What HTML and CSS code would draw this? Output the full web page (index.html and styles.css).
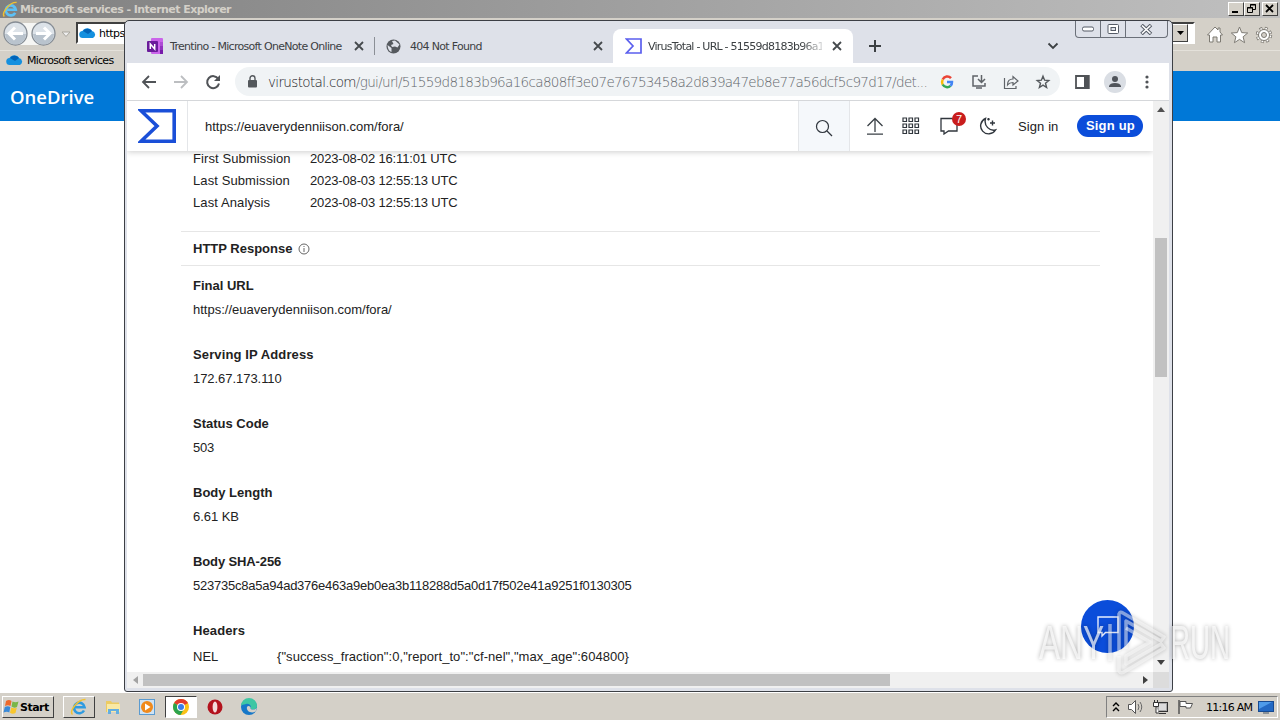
FILE: index.html
```html
<!DOCTYPE html>
<html lang="en">
<head>
  <meta charset="UTF-8">
  <meta name="viewport" content="width=device-width, initial-scale=1.0">
  <title>Microsoft services</title>
  <link rel="stylesheet" href="styles.css">
</head>
<body>
  <div class="desktop">

    <!-- Internet Explorer window -->
    <div class="ie-title">
      <svg class="ie-logo" width="17" height="17" viewBox="0 0 18 18"><path d="M14 12.500a5.300 5.300 0 1 1 .6-3.200H5" fill="none" stroke="#5cc0f5" stroke-width="2.800"/><path d="M2.500 16.500C-1 13 8 1 15.500 1.500" fill="none" stroke="#f2c230" stroke-width="1.500"/></svg>
      <span class="ie-caption">Microsoft services - Internet Explorer</span>
      <div class="classic-buttons">
        <span class="classic"><svg width="13" height="11"><path d="M3 9h6" stroke="#000" stroke-width="2"/></svg></span>
        <span class="classic"><svg width="13" height="11"><path d="M5.500 4V1.500h5v5H8M5 2h6M2.500 4.500h5v5h-5zM2 5h6" fill="none" stroke="#000"/></svg></span>
        <span class="classic last"><svg width="13" height="11"><path d="M3 2l7 7M10 2l-7 7" stroke="#000" stroke-width="1.800"/></svg></span>
      </div>
    </div>
    <div class="ie-toolbar">
      <svg width="72" height="32" viewBox="0 0 72 32">
        <rect x="4" y="5" width="50" height="22" rx="11" fill="#f6f6f4"/>
        <g fill="#dce2e8" stroke="#858c94" stroke-width="1.300"><circle cx="15.500" cy="15.500" r="11.500"/><circle cx="43.500" cy="15.500" r="11.500"/></g>
        <g fill="#b9c3cd"><path d="M5 16a10.500 10.500 0 0 0 21 0zM33 16a10.500 10.500 0 0 0 21 0z"/></g>
        <path d="M23 15.500H9m6-6l-6 6 6 6M36 15.500h14m-6-6l6 6-6 6" fill="none" stroke="#fff" stroke-width="3"/>
        <path d="M62 14h8l-4 4.500z" fill="#eee" stroke="#a9a69e"/>
      </svg>
      <div class="ie-address">
        <svg class="cloud" width="18" height="12" viewBox="0 0 18 12"><path d="M4 11a3.500 3.500 0 0 1-.5-7A5.500 5.500 0 0 1 13 4a3.700 3.700 0 0 1 1 7z" fill="#1490df"/><path d="M4 4a5.500 5.500 0 0 1 9 0L9 7z" fill="#0364b8"/></svg>
        <span>https</span>
        <span class="dropdown"><svg width="9" height="6"><path d="M1 1h7L4.500 5z"/></svg></span>
      </div>
      <svg class="ie-tools" width="72" height="22" viewBox="0 0 72 22">
        <g fill="#fff" stroke="#7d7a73" stroke-width="1">
          <path d="M1.500 11L9 3l3 3V4h2v4l2.500 3h-2v7H11v-5H7v5H3.500v-7z"/>
          <path d="M33.500 3l2.200 5.600 6 .4-4.600 3.800 1.500 5.900-5.100-3.300-5.100 3.300 1.500-5.900L25.300 9l6-.4z"/>
          <circle cx="58" cy="11" r="6.200" fill="none" stroke-width="4" stroke-dasharray="2.600 2.270"/>
          <circle cx="58" cy="11" r="6.200" fill="none" stroke="#fff" stroke-width="2.400" stroke-dasharray="1.600 3.270" stroke-dashoffset="-.5"/>
          <circle cx="58" cy="11" r="5.500"/><circle cx="58" cy="11" r="2.500" fill="#d4d0c8"/>
        </g>
      </svg>
    </div>
    <div class="ie-favorites">
      <svg class="cloud" width="18" height="12" viewBox="0 0 18 12"><path d="M4 11a3.500 3.500 0 0 1-.5-7A5.500 5.500 0 0 1 13 4a3.700 3.700 0 0 1 1 7z" fill="#1490df"/><path d="M4 4a5.500 5.500 0 0 1 9 0L9 7z" fill="#0364b8"/></svg>
      <span>Microsoft services</span>
    </div>
    <div class="onedrive">OneDrive</div>
    <div class="ie-page"></div>

    <!-- Taskbar -->
    <div class="taskbar">
      <div class="start">
        <svg width="17" height="16" viewBox="0 0 17 16"><path d="M3 2q3-2 5.500 0L7.500 7Q5 5.500 2 7z" fill="#ee6a2c"/><path d="M9.500 2.500q3 1.500 6 0L14 8q-3 1.500-5.500-.5z" fill="#7ab648"/><path d="M1.800 8q3-1.500 5.500 0l-1 5.500Q4 12 .5 13.500z" fill="#3a8ad8"/><path d="M8.300 8.500q2.700 1.500 5.500.3L12.500 14q-3 1.500-5.500-.3z" fill="#f8c62c"/></svg>
        <span>Start</span>
      </div>
      <div class="task raised"><svg width="18" height="18" viewBox="0 0 18 18"><path d="M14 12.500a5.300 5.300 0 1 1 .6-3.200H5" fill="none" stroke="#2f9be0" stroke-width="2.600"/><path d="M2.500 16.500C-1 13 8 1 15.500 1.500" fill="none" stroke="#f2c230" stroke-width="1.500"/></svg></div>
      <div class="task"><svg width="18" height="18" viewBox="0 0 18 18"><path d="M2 3h5l1 1.500h7V14H2z" fill="#eccb62"/><path d="M3 6h13v8H3z" fill="#f9e9a4"/><path d="M4 16v-5h11v5h-3v-3H7v3z" fill="#64aee0"/></svg></div>
      <div class="task"><svg width="18" height="18" viewBox="0 0 18 18"><rect x="1.500" y="1.500" width="15" height="15" fill="#cfe3f4" stroke="#5b9bd0"/><circle cx="9" cy="9" r="6" fill="#f08a1c"/><path d="M7 5.500v7l5.500-3.500z" fill="#fff"/></svg></div>
      <div class="task pressed"><svg width="18" height="18" viewBox="0 0 18 18"><circle cx="9" cy="9" r="8" fill="#fbc116"/><path d="M9 9L2.100 5A8 8 0 0 1 16 5z" fill="#e33b2e"/><path d="M9 9L2.100 5A8 8 0 0 0 8.500 17l3.500-6z" fill="#2da44e"/><circle cx="9" cy="9" r="4" fill="#fff"/><circle cx="9" cy="9" r="3" fill="#3b7de9"/></svg></div>
      <div class="task"><svg width="18" height="18" viewBox="0 0 18 18"><circle cx="9" cy="9" r="7.500" fill="#b3121d"/><ellipse cx="9" cy="9" rx="2.400" ry="5.500" fill="#f4dada"/></svg></div>
      <div class="task"><svg width="18" height="18" viewBox="0 0 18 18"><circle cx="9" cy="9" r="8" fill="#1677c8"/><path d="M1 8a8 8 0 0 1 16 0c0 4-5 4-6.500 2.500C12 8 9 5 6 6 3.500 6.500 1.500 7 1 8z" fill="#3ec6a4"/><path d="M7 9c-1 4 4 7 8.500 4.500L17 10c-3 2.500-7 1.500-6.500 0C11 8.500 8 7 7 9z" fill="#d4d0c8"/></svg></div>
      <div class="tray">
        <svg width="8" height="12" viewBox="0 0 8 12"><path d="M1 5l3-3 3 3M1 10l3-3 3 3" fill="none" stroke="#000" stroke-width="1.400"/></svg>
        <svg class="tray-icon" width="18" height="16" viewBox="0 0 18 16"><path d="M1.500 5.500h3l4-4v13l-4-4h-3z" fill="#fff" stroke="#555"/><path d="M11 5q2 3 0 6M13 3q3.500 5 0 10" fill="none" stroke="#666"/></svg>
        <svg class="tray-icon" width="18" height="16" viewBox="0 0 18 16"><rect x="4.500" y="3.500" width="11" height="9" fill="#aaa" stroke="#333"/><path d="M7 5h7v6H7z" fill="#dcdcdc"/><path d="M7 14.500h7" stroke="#333"/><path d="M1.500 3.500h5v4h-5zM2.500 1v2M5.500 1v2M4 7v7h3" fill="#fff" stroke="#333"/></svg>
        <svg class="tray-icon" width="17" height="16" viewBox="0 0 17 16"><path d="M2 1v14" stroke="#555" stroke-width="1.500"/><path d="M3 2.500h6v2h6.500l-2 4.500H9V7.500H3z" fill="#fff" stroke="#555"/></svg>
        <span class="clock">11:16 AM</span>
        <svg width="16" height="14" viewBox="0 0 16 14"><rect x=".5" y="1.500" width="15" height="10" fill="#2369c4" stroke="#174a91"/><path d="M1 2h13L1 9z" fill="#4e9bea"/><path d="M5 13h6" stroke="#456"/></svg>
      </div>
    </div>

    <!-- Chrome window -->
    <div class="chrome">
      <div class="window-buttons">
        <span><svg width="13" height="6"><rect x=".5" y="1" width="11" height="4" rx="1.500" fill="#fff" stroke="#555b66"/></svg></span>
        <span><svg width="13" height="11"><rect x="1" y=".5" width="10.500" height="9" rx="1" fill="#fff" stroke="#555b66"/><rect x="4" y="3.500" width="4.500" height="3" fill="#dee1e9" stroke="#555b66"/></svg></span>
        <span class="wide"><svg width="13" height="11"><path d="M1.500 1L11 10M11 1L1.500 10" stroke="#555b66" stroke-width="3.600"/><path d="M2 1.500l8.500 8M10.500 1.500L2 9.500" stroke="#fff" stroke-width="1.700"/></svg></span>
      </div>

      <div class="tabs">
        <div class="tab">
          <svg width="16" height="16" viewBox="0 0 16 16"><rect x="4" width="12" height="16" rx="1" fill="#ca64ea"/><path d="M13 4h3v4h-3z" fill="#ae4bd5"/><path d="M13 8h3v4h-3z" fill="#9332bf"/><path d="M13 12h3v4h-3z" fill="#7719aa"/><rect y="3" width="11" height="11" rx="1" fill="#6a1b9a"/><path d="M3.300 11V6l4.400 5V6" fill="none" stroke="#fff" stroke-width="1.500"/></svg>
          <span class="tab-title first">Trentino - Microsoft OneNote Online</span>
          <svg class="close" width="10" height="10"><path d="M1 1l8 8M9 1l-8 8" stroke="#45494d" stroke-width="1.800"/></svg>
        </div>
        <div class="tab second">
          <svg width="15" height="15" viewBox="0 0 15 15"><circle cx="7.500" cy="7.500" r="7" fill="#55595e"/><path d="M1.500 6l4 3v4Q2 12 1.500 6zM6 2l3-.5 4.500 4-2 3-2.500-1-3 .5-1-2 2.500-1z" fill="#dee1e9"/></svg>
          <span class="tab-title nf">404 Not Found</span>
          <svg class="close" width="10" height="10"><path d="M1 1l8 8M9 1l-8 8" stroke="#45494d" stroke-width="1.800"/></svg>
        </div>
        <div class="tab active">
          <svg width="17" height="16" viewBox="0 0 17 16"><path d="M1.500 1H16v14H1.500L8 8z" fill="none" stroke="#5b5fee" stroke-width="1.700"/></svg>
          <span class="tab-title vt">VirusTotal - URL - 51559d8183b96a1</span>
          <svg class="close" width="10" height="10"><path d="M1 1l8 8M9 1l-8 8" stroke="#45494d" stroke-width="1.800"/></svg>
        </div>
        <svg class="new-tab" width="12" height="12"><path d="M6 0v12M0 6h12" stroke="#3c4043" stroke-width="2"/></svg>
        <svg class="tab-search" width="12" height="8"><path d="M1.500 1.500L6 6l4.500-4.500" fill="none" stroke="#3c4043" stroke-width="1.800"/></svg>
      </div>

      <div class="omnibar">
        <svg class="nav back" width="16" height="14"><path d="M15 7H2m6-6L2 7l6 6" fill="none" stroke="#505357" stroke-width="1.800"/></svg>
        <svg class="nav forward" width="16" height="14"><path d="M1 7h13M8 1l6 6-6 6" fill="none" stroke="#bcbec1" stroke-width="1.800"/></svg>
        <svg class="nav" width="16" height="16"><path d="M13.300 5A6 6 0 1 0 14 9.500" fill="none" stroke="#505357" stroke-width="2"/><path d="M15 1v6H9z" fill="#505357"/></svg>
        <div class="omnibox">
          <svg width="10" height="13" viewBox="0 0 10 13"><rect x="1" y="5" width="9" height="7.500" rx="1" fill="#54585c"/><path d="M3 5V3.300a2.500 2.500 0 0 1 5 0V5" fill="none" stroke="#54585c" stroke-width="1.400"/></svg>
          <span class="url"><b>virustotal.com</b>/gui/url/51559d8183b96a16ca808ff3e07e76753458a2d839a47eb8e77a56dcf5c97d17/det...</span>
          <div class="omni-icons">
            <svg width="16" height="16" viewBox="0 0 16 16" fill="none" stroke-width="2.500"><path d="M12 4.200A5 5 0 0 0 3.700 5.500" stroke="#ea4335"/><path d="M3.700 5.500a5 5 0 0 0 0 5" stroke="#fbbc05"/><path d="M3.700 10.500a5 5 0 0 0 7.800 1.300" stroke="#34a853"/><path d="M8 8h5a5 5 0 0 1-1.500 3.800" stroke="#4285f4"/></svg>
            <svg width="16" height="16" viewBox="0 0 16 16" fill="none" stroke="#5f6368" stroke-width="1.500"><path d="M7 2H2v10h12V9M5 14h6M10.500 1v7M7 5l3.500 3.500L14 5"/></svg>
            <svg width="16" height="16" viewBox="0 0 16 16" fill="none" stroke="#5f6368" stroke-width="1.200"><path d="M1.500 4v10.500H13V12M4.500 11c0-4 2-6 5.500-6V2.500L15 7l-5 4V8.500C7.500 8.500 6 9 4.500 11z"/></svg>
            <svg width="16" height="16" viewBox="0 0 16 16" fill="none" stroke="#54585c" stroke-width="1.400"><path d="M8 2.200l1.600 4 4.200.3-3.300 2.800 1.100 4.200L8 11.200l-3.600 2.300 1.100-4.200-3.300-2.800 4.200-.3z"/></svg>
          </div>
        </div>
        <svg class="side-panel" width="15" height="14"><path d="M1 1h12.500v12H1z" fill="none" stroke="#505357" stroke-width="1.800"/><path d="M9 0h5.500v14H9z" fill="#505357"/></svg>
        <svg class="avatar" width="22" height="22"><circle cx="11" cy="11" r="11" fill="#dadee4"/><circle cx="11" cy="8" r="3" fill="#50545a"/><path d="M5 16v-1q1-3 6-3t6 3v1z" fill="#50545a"/></svg>
        <svg class="menu" width="4" height="16" fill="#505357"><circle cx="2" cy="3" r="1.600"/><circle cx="2" cy="8" r="1.600"/><circle cx="2" cy="13" r="1.600"/></svg>
      </div>

      <div class="viewport">
        <div class="page">
          <div class="vt-header">
            <div class="vt-logo"><svg width="38" height="34" viewBox="0 0 38 34"><path d="M3 1.700h33.200v30.600H3L19 17z" fill="none" stroke="#1a4fd8" stroke-width="3.600"/></svg></div>
            <div class="vt-query">https://euaverydenniison.com/fora/</div>
            <div class="vt-search"><svg width="18" height="18"><circle cx="7.500" cy="7.500" r="6" fill="none" stroke="#30363d" stroke-width="1.200"/><path d="M12 12l5 5" stroke="#30363d" stroke-width="1.300"/></svg></div>
            <svg class="upload" width="18" height="18" viewBox="0 0 18 18" fill="none" stroke="#3a4046" stroke-width="1.300"><path d="M9 15V1.500M1.500 9L9 1.500 16.500 9M1 17.200h16"/></svg>
            <svg class="grid" width="18" height="18" viewBox="0 0 18 18" fill="none" stroke="#30363d" stroke-width="1.200"><path d="M1 1h3.500v3.500H1zM7 1h3.500v3.500H7zM13 1h3.500v3.500H13zM1 7h3.500v3.500H1zM7 7h3.500v3.500H7zM13 7h3.500v3.500H13zM1 13h3.500v3.500H1zM7 13h3.500v3.500H7zM13 13h3.500v3.500H13z"/></svg>
            <div class="comments">
              <svg width="20" height="18" viewBox="0 0 20 18"><path d="M1 1.500h16V14H8.500L4 17v-3H1z" fill="none" stroke="#30363d" stroke-width="1.300"/></svg>
              <span class="badge">7</span>
            </div>
            <svg class="moon" width="18" height="18" viewBox="0 0 18 18" fill="none" stroke="#30363d" stroke-width="1.400"><path d="M6.500 1.500a8 8 0 1 0 10 11.500C11 14.500 4.500 9 6.500 1.500zM13.500 3.500v5M11 6h5M9.500 1v2.500M8.300 2.200h2.400"/></svg>
            <span class="sign-in">Sign in</span>
            <span class="sign-up">Sign up</span>
          </div>

          <div class="details">
            <div class="row"><span class="key">First Submission</span><span class="date">2023-08-02 16:11:01 UTC</span></div>
            <div class="row"><span class="key">Last Submission</span><span class="date">2023-08-03 12:55:13 UTC</span></div>
            <div class="row"><span class="key">Last Analysis</span><span class="date">2023-08-03 12:55:13 UTC</span></div>
            <div class="section-title">
              <span>HTTP Response</span>
              <svg width="12" height="12" viewBox="0 0 12 12" fill="none" stroke="#555" stroke-width=".9"><circle cx="6" cy="6" r="5"/><path d="M6 5v4M6 3v1"/></svg>
            </div>
            <div class="field"><h4>Final URL</h4><p>https://euaverydenniison.com/fora/</p></div>
            <div class="field"><h4 class="loose">Serving IP Address</h4><p class="ip">172.67.173.110</p></div>
            <div class="field"><h4>Status Code</h4><p class="tight">503</p></div>
            <div class="field"><h4>Body Length</h4><p class="ip">6.61 KB</p></div>
            <div class="field"><h4 class="sha">Body SHA-256</h4><p class="tight">523735c8a5a94ad376e463a9eb0ea3b118288d5a0d17f502e41a9251f0130305</p></div>
            <div class="field headers"><h4 class="loose">Headers</h4><p><span class="header-key">NEL</span><span class="header-value">{"success_fraction":0,"report_to":"cf-nel","max_age":604800}</span></p></div>
          </div>

          <div class="chat">
            <svg width="22" height="22" viewBox="0 0 22 22"><path d="M1 1h20v15.500H8.500L5 20v-3.500H1z" fill="none" stroke="#e8eeff" stroke-width="1.400"/></svg>
          </div>
        </div>
        <div class="vscroll">
          <svg width="8" height="5"><path d="M0 5l4-5 4 5z" fill="#505050"/></svg>
          <span class="thumb"></span>
          <svg width="8" height="5"><path d="M0 0l4 5 4-5z" fill="#404040"/></svg>
        </div>
        <div class="hscroll">
          <svg width="5" height="8"><path d="M5 0L0 4l5 4z" fill="#a3a3a3"/></svg>
          <span class="thumb"></span>
          <svg width="5" height="8"><path d="M0 0l5 4-5 4z" fill="#404040"/></svg>
        </div>
        <div class="corner"></div>
      </div>
    </div>

    <svg class="watermark" width="210" height="74" viewBox="0 0 210 74">
      <g class="watermark-text">
        <text x="3" y="53" textLength="65" lengthAdjust="spacingAndGlyphs">ANY</text>
        <text x="134" y="53" textLength="60" lengthAdjust="spacingAndGlyphs">RUN</text>
      </g>
      <g fill="none" stroke="#fff" stroke-opacity=".5" stroke-width="3.500" stroke-linejoin="round">
        <path d="M74 18v37M83 45V8q1-3 4-1l41 24-3 4-35-20v28"/>
        <path d="M83 50v15q2 3 5 1l40-24-3-4-35 20v-8l24-14-24-14"/>
      </g>
    </svg>
  </div>
</body>
</html>
```
FILE: styles.css
```css
* {
  box-sizing: border-box;
}
body {
  margin: 0;
  font-family: "DejaVu Sans", sans-serif;
  font-size: 11px;
  color: #000;
}
svg {
  display: block;
  flex: none;
}
.desktop {
  position: relative;
  display: flex;
  flex-direction: column;
  width: 1280px;
  height: 720px;
  overflow: hidden;
  background: #fff;
}

/* Internet Explorer */
.ie-title {
  display: flex;
  align-items: center;
  height: 18px;
  padding-left: 2px;
  background: linear-gradient(to right, #808080, #c0c0c0);
}
.ie-caption {
  margin-left: 1px;
  font-size: 11px;
  font-weight: bold;
  letter-spacing: -0.55px;
  color: #d4d0c8;
  white-space: nowrap;
}
.classic-buttons {
  display: flex;
  margin-left: auto;
  padding-right: 2px;
}
.classic {
  display: flex;
  width: 16px;
  height: 14px;
  background: #d4d0c8;
  border: 1px solid;
  border-color: #fff #404040 #404040 #fff;
}
.classic.last {
  margin-left: 2px;
}
.ie-toolbar {
  display: flex;
  height: 32px;
  background: #d4d0c8;
}
.ie-address {
  display: flex;
  align-items: center;
  width: 1119px;
  height: 22px;
  margin: 4px 0 0 4px;
  padding-left: 1px;
  border: 2px solid;
  border-color: #404040 #fff #fff #404040;
  background: #fff;
  letter-spacing: -0.5px;
}
.ie-address span {
  margin-left: 2px;
}
.ie-address .dropdown {
  display: flex;
  align-items: center;
  justify-content: center;
  width: 16px;
  height: 18px;
  margin: 0 5px 0 auto;
  background: #d4d0c8;
  border: 1px solid;
  border-color: #fff #404040 #404040 #fff;
}
.ie-tools {
  margin: 6px 0 0 11px;
}
.ie-favorites {
  display: flex;
  align-items: center;
  height: 21px;
  padding: 0 0 2px 6px;
  background: #d4d0c8;
  border-top: 1px solid #e4e1da;
  letter-spacing: -0.68px;
}
.ie-favorites span {
  margin-left: 3px;
}
.onedrive {
  height: 50px;
  padding-left: 10px;
  background: #0078d7;
  color: #fff;
  font: 600 18.5px/51px "Open Sans", sans-serif;
}
.ie-page {
  flex: 1;
}

/* Taskbar */
.taskbar {
  display: flex;
  align-items: center;
  height: 28px;
  padding: 1px 2px 0;
  background: #d4d0c8;
  border-top: 1px solid #fff;
}
.start {
  display: flex;
  align-items: center;
  width: 52px;
  height: 22px;
  margin-right: 9px;
  border: 1px solid;
  border-color: #fff #404040 #404040 #fff;
  font-weight: bold;
  letter-spacing: -0.5px;
}
.task {
  display: flex;
  align-items: center;
  justify-content: center;
  width: 32px;
  height: 22px;
  margin-right: 2px;
}
.task.raised {
  border: 1px solid;
  border-color: #fff #404040 #404040 #fff;
}
.task.pressed {
  background: #fff;
  border: 1px solid;
  border-color: #404040 #fff #fff #404040;
}
.tray {
  display: flex;
  align-items: center;
  width: 172px;
  height: 22px;
  margin-left: auto;
  padding-left: 5px;
  border: 1px solid;
  border-color: #808080 #fff #fff #808080;
}
.tray-icon {
  margin-left: 7px;
}
.clock {
  width: 50px;
  margin: 0 2px 0 12px;
  letter-spacing: -0.75px;
  white-space: nowrap;
}

/* Chrome window */
.chrome {
  position: absolute;
  left: 124px;
  top: 20px;
  width: 1049px;
  height: 672px;
  padding: 0 3px 3px 2px;
  background: #dee1e9;
  border: 1px solid #3c3f45;
  border-radius: 5px 5px 3px 3px;
}
.window-buttons {
  position: absolute;
  top: 0;
  right: 4px;
  display: flex;
  height: 17px;
  border: 1px solid #6b7079;
  border-top: 0;
  border-radius: 0 0 4px 4px;
}
.window-buttons span {
  display: flex;
  align-items: center;
  justify-content: center;
  width: 25px;
  border-right: 1px solid #6b7079;
}
.window-buttons .wide {
  width: 41px;
  border: 0;
}
.tabs {
  display: flex;
  align-items: center;
  height: 42px;
  padding-top: 8px;
}
.tab {
  display: flex;
  align-items: center;
  width: 247px;
  height: 34px;
  padding-left: 20px;
}
.tab.second {
  width: 239px;
  padding-left: 12px;
  background: linear-gradient(#8b8f96, #8b8f96) no-repeat 0 8px / 1px 18px;
}
.tab.active {
  width: 240px;
  padding-left: 12px;
  background: #fff;
  border-radius: 8px 8px 0 0;
}
.tab-title {
  color: #3c4043;
  letter-spacing: -0.7px;
  white-space: nowrap;
}
.tab-title.first {
  width: 184px;
  margin-left: 7px;
}
.tab-title.nf {
  width: 184px;
  margin-left: 9px;
}
.tab-title.vt {
  width: 174px;
  margin-left: 6px;
  letter-spacing: -0.76px;
  -webkit-mask-image: linear-gradient(to right, #000 88%, rgba(0, 0, 0, 0.2));
  mask-image: linear-gradient(to right, #000 88%, rgba(0, 0, 0, 0.2));
}
.tab .close {
  margin-left: auto;
  margin-right: 10px;
}
.tab.active .close {
  margin-right: 11px;
}
.new-tab {
  margin-left: 16px;
}
.tab-search {
  margin-left: 166px;
}
.omnibar {
  display: flex;
  align-items: center;
  height: 37px;
  background: #fff;
}
.nav {
  margin-right: 14px;
}
.nav.back {
  margin-left: 14px;
  margin-right: 16px;
}
.nav.forward {
  margin-right: 16px;
}
.omnibox {
  display: flex;
  align-items: center;
  width: 825px;
  height: 29px;
  padding-left: 12px;
  background: #f0f3f5;
  border-radius: 15px;
}
.url {
  width: 662px;
  margin-left: 11px;
  color: #62666b;
  font: 13.5px "DejaVu Sans", sans-serif;
  font-weight: 200;
  letter-spacing: -0.65px;
  white-space: nowrap;
}
.url b {
  color: #202124;
  font-weight: 200;
}
.omni-icons {
  display: flex;
  gap: 16px;
  margin-left: 9px;
}
.side-panel {
  margin-left: 15px;
}
.avatar {
  margin-left: 14px;
}
.menu {
  margin-left: 19px;
}

/* Web page area */
.viewport {
  display: grid;
  grid-template-columns: 1026px 16px;
  grid-template-rows: 571px 16px;
  border-top: 1px solid #d5d7da;
}
.page {
  position: relative;
  overflow: hidden;
  background: #fff;
  font-family: "Liberation Sans", sans-serif;
  font-size: 13px;
  color: #222;
}
.vt-header {
  position: relative;
  z-index: 1;
  display: flex;
  align-items: center;
  height: 50px;
  background: #fff;
  box-shadow: 0 1px 6px rgba(0, 0, 0, 0.2);
}
.vt-logo {
  display: flex;
  align-items: center;
  width: 61px;
  height: 50px;
  padding-left: 11px;
  border-right: 1px solid #e4e6e9;
}
.vt-query {
  width: 610px;
  padding-left: 17px;
}
.vt-search {
  display: flex;
  align-items: center;
  justify-content: center;
  width: 52px;
  height: 50px;
  padding-top: 4px;
  background: #f5f8fb;
  border: solid #e4e6e9;
  border-width: 0 1px;
}
.upload {
  margin-left: 16px;
}
.grid {
  margin-left: 18px;
}
.comments {
  position: relative;
  margin-left: 20px;
}
.badge {
  position: absolute;
  top: -5px;
  left: 12px;
  width: 14px;
  height: 14px;
  border-radius: 50%;
  background: #c91d1d;
  color: #fff;
  font-size: 11px;
  line-height: 14px;
  text-align: center;
}
.moon {
  margin-left: 19px;
}
.sign-in {
  margin-left: 21px;
  letter-spacing: 0.1px;
}
.sign-up {
  width: 66px;
  height: 22px;
  margin-left: 19px;
  border-radius: 11px;
  background: #0b4dda;
  color: #fff;
  font-weight: bold;
  letter-spacing: 0.2px;
  line-height: 22px;
  text-align: center;
}
.details {
  margin-top: -4px;
  padding-left: 66px;
}
.row {
  display: flex;
  height: 22px;
  line-height: 23px;
}
.key {
  width: 117px;
  letter-spacing: 0.1px;
}
.date {
  letter-spacing: -0.15px;
}
.section-title {
  display: flex;
  align-items: center;
  width: 919px;
  height: 35px;
  margin: 18px 0 8px -12px;
  padding-left: 12px;
  border: solid #e6e6e6;
  border-width: 1px 0;
  font-weight: bold;
}
.section-title svg {
  margin-left: 6px;
}
.field {
  height: 69px;
}
.field h4,
.field p {
  height: 24px;
  margin: 0;
  font-size: 13px;
  line-height: 23px;
  white-space: nowrap;
}
.field .loose {
  letter-spacing: 0.12px;
}
.field .sha {
  letter-spacing: -0.12px;
}
.field .ip {
  letter-spacing: -0.05px;
}
.field .tight {
  letter-spacing: -0.24px;
}
.headers p {
  display: flex;
  padding-top: 2px;
}
.header-key {
  width: 84px;
}
.header-value {
  letter-spacing: 0.06px;
}
.chat {
  position: absolute;
  right: 19px;
  bottom: 19px;
  display: flex;
  align-items: center;
  justify-content: center;
  width: 53px;
  height: 53px;
  border-radius: 50%;
  background: #0b4dda;
}
.vscroll,
.hscroll {
  display: flex;
  align-items: center;
  background: #f0f0f0;
}
.vscroll {
  flex-direction: column;
  padding: 6px 0 7px;
}
.vscroll .thumb {
  width: 12px;
  height: 139px;
  margin: 126px 0 auto;
  background: #c1c1c1;
}
.hscroll {
  padding: 0 5px 0 6px;
}
.hscroll .thumb {
  width: 747px;
  height: 12px;
  margin: 0 auto 0 5px;
  background: #c1c1c1;
}
.corner {
  background: #dcdcdc;
}
.watermark {
  position: absolute;
  left: 1036px;
  top: 606px;
  filter: drop-shadow(0 0 2px rgba(0, 0, 0, 0.45));
}
.watermark-text {
  fill: #fff;
  fill-opacity: 0.7;
  font-family: "Liberation Sans", sans-serif;
  font-size: 49px;
}
```
